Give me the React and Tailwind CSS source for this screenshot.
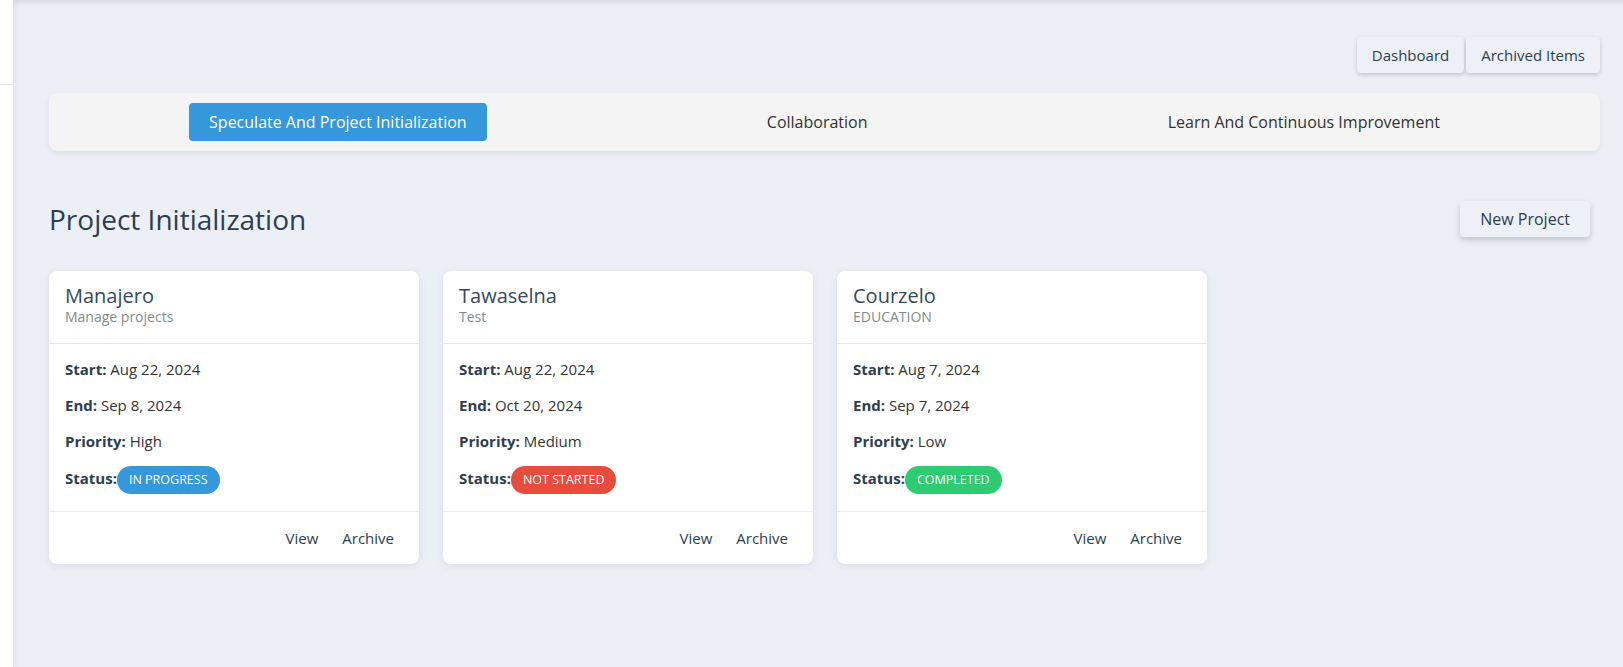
import React from 'react';

const tabs = [
  { label: 'Speculate And Project Initialization', active: true },
  { label: 'Collaboration', active: false },
  { label: 'Learn And Continuous Improvement', active: false },
];

const projects = [
  { name: 'Manajero', desc: 'Manage projects', start: 'Aug 22, 2024', end: 'Sep 8, 2024', priority: 'High', status: 'IN PROGRESS', badge: 'bg-[#3498db]' },
  { name: 'Tawaselna', desc: 'Test', start: 'Aug 22, 2024', end: 'Oct 20, 2024', priority: 'Medium', status: 'NOT STARTED', badge: 'bg-[#e74c3c]' },
  { name: 'Courzelo', desc: 'EDUCATION', start: 'Aug 7, 2024', end: 'Sep 7, 2024', priority: 'Low', status: 'COMPLETED', badge: 'bg-[#2ecc71]' },
];

function Row({ label, value }) {
  return (
    <p className="text-[15px] leading-[22px] text-[#333] mb-[14px]">
      <span className="font-bold text-[#2c3e50]">{label}:</span> {value}
    </p>
  );
}

function ProjectCard({ p }) {
  return (
    <div className="w-[370px] bg-white rounded-lg shadow-[0_2px_8px_rgba(0,0,0,0.08)] flex flex-col">
      {/* header */}
      <div className="px-4 pt-[12px] pb-[17px] border-b border-[#e8e8e8]">
        <h3 className="text-[20px] leading-[25px] text-[#34495e]">{p.name}</h3>
        <p className="text-[14px] leading-[18px] text-[#7f8c8d]">{p.desc}</p>
      </div>

      {/* body */}
      <div className="px-4 pt-[14px] pb-[17px] border-b border-[#ececec]">
        <Row label="Start" value={p.start} />
        <Row label="End" value={p.end} />
        <Row label="Priority" value={p.priority} />
        <div className="flex items-baseline text-[15px] text-[#333]">
          <span className="font-bold text-[#2c3e50] leading-[22px]">Status:</span>
          <span className={`${p.badge} text-white text-[12.5px] leading-[28px] px-3 rounded-full`}>{p.status}</span>
        </div>
      </div>

      {/* footer */}
      <div className="flex justify-end py-2 pr-[13px]">
        <button className="px-3 py-[7px] text-[15px] leading-[22px] text-[#2c3e50]">View</button>
        <button className="px-3 py-[7px] text-[15px] leading-[22px] text-[#2c3e50]">Archive</button>
      </div>
    </div>
  );
}

export default function App() {
  return (
    <div className="flex min-h-screen font-['Open_Sans',sans-serif] bg-[#eceff6]">
      {/* sidebar strip */}
      <div className="w-[13px] shrink-0 bg-white shadow-[2px_0_6px_rgba(0,0,0,0.06)] z-10">
        <div className="h-[85px] border-b border-[#e6e6e6]" />
      </div>

      <div className="flex-1 flex flex-col">
        <div className="h-[6px] bg-gradient-to-b from-[#d9dce3] to-[#eceff6]" />

        <div className="pl-[36px] pr-[23px] pt-[31px] pb-10">
          {/* top actions */}
          <div className="flex justify-end gap-[2px]">
            <button className="px-[15px] py-[7px] text-[15px] leading-[22px] text-[#2c3e50] bg-[#edf0f7] rounded shadow-[0_2px_4px_rgba(0,0,0,0.18)]">Dashboard</button>
            <button className="px-[15px] py-[7px] text-[15px] leading-[22px] text-[#2c3e50] bg-[#edf0f7] rounded shadow-[0_2px_4px_rgba(0,0,0,0.18)]">Archived Items</button>
          </div>

          {/* phase tabs */}
          <div className="mt-5 bg-[#f4f4f4] rounded-lg p-[10px] flex justify-around shadow-[0_2px_6px_rgba(0,0,0,0.08)]">
            {tabs.map(t => (
              <button
                key={t.label}
                className={`px-5 py-[7px] text-[16px] leading-[24px] rounded ${t.active ? 'bg-[#3498db] text-white' : 'text-[#333]'}`}
              >
                {t.label}
              </button>
            ))}
          </div>

          {/* section heading */}
          <div className="mt-[50px] flex items-start justify-between pr-[10px]">
            <h2 className="text-[28px] leading-[36px] text-[#2c3e50]">Project Initialization</h2>
            <button className="px-5 py-[6px] text-[16px] leading-[24px] text-[#2c3e50] bg-[#edf0f7] rounded shadow-[0_3px_6px_rgba(0,0,0,0.18)]">New Project</button>
          </div>

          {/* cards */}
          <div className="mt-[34px] flex gap-6">
            {projects.map(p => (
              <ProjectCard key={p.name} p={p} />
            ))}
          </div>
        </div>
      </div>
    </div>
  );
}
